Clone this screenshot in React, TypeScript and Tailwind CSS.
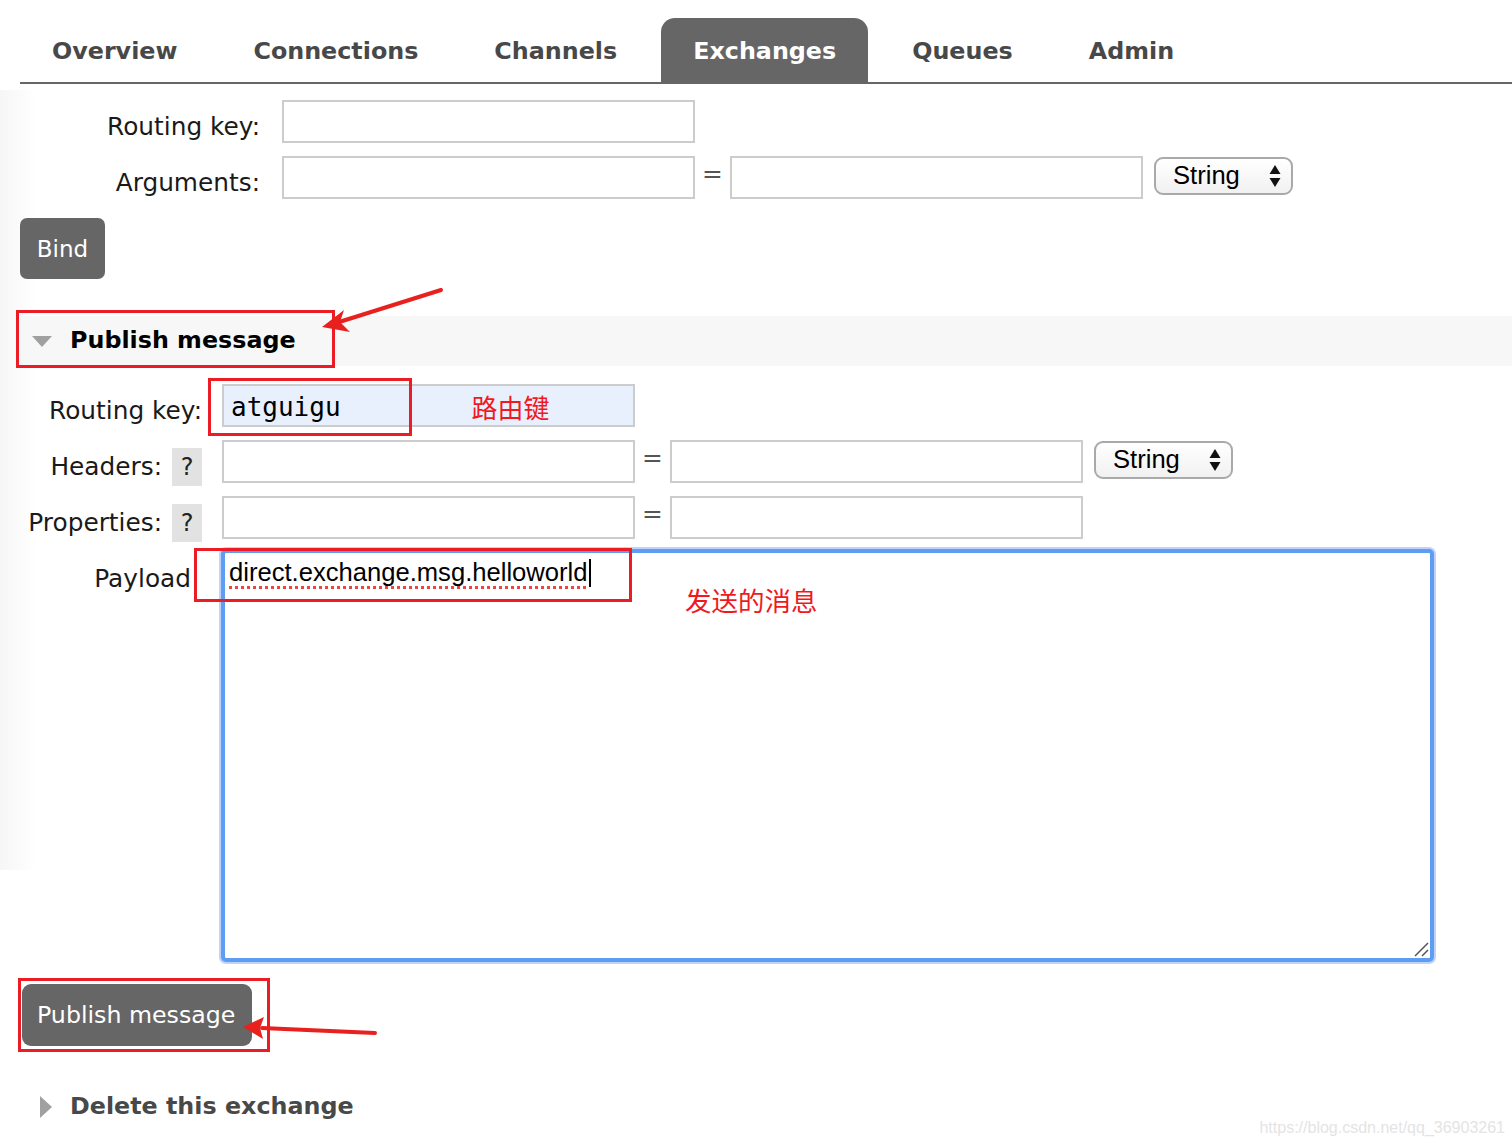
const tabs = ["Overview", "Connections", "Channels", "Exchanges", "Queues", "Admin"];

const verdana = "font-['Verdana','DejaVu_Sans',sans-serif]";

const TextInput = ({ className = "" }: { className?: string }) => (
  <div className={`h-[43px] w-[413px] shrink-0 border-2 border-[#cccccc] bg-white ${className}`} />
);

const TypeSelect = () => (
  <div className="mt-[1px] flex h-[38px] w-[139px] items-center justify-between rounded-[9px] border-2 border-[#a9a9a9] bg-gradient-to-b from-white to-[#f1f1f1] pl-[17px] pr-[10px] font-['Liberation_Sans',Arial,sans-serif] text-[25.6px] text-black">
    <span className="leading-none">String</span>
    <svg width="12" height="24" viewBox="0 0 12 24">
      <path d="M6 1 L11.5 10 L0.5 10 Z" fill="#111" />
      <path d="M6 23 L11.5 14 L0.5 14 Z" fill="#111" />
    </svg>
  </div>
);

const Help = () => (
  <span className="ml-[10px] flex h-[38px] w-[30px] items-center justify-center bg-[#e2e2e2] text-[24px] text-[#222]">?</span>
);

const Eq = () => <span className="mt-[3px] w-[35px] text-center text-[#555]">=</span>;

const RedBox = ({ className }: { className: string }) => (
  <div className={`pointer-events-none absolute border-[3px] border-[#ec1c24] ${className}`} />
);

const App = () => {
  return (
    <div className={`relative h-[1148px] w-full overflow-hidden bg-white ${verdana}`}>
      {/* faint shadow on the left edge */}
      <div className="pointer-events-none absolute left-0 top-[90px] h-[780px] w-[36px] bg-gradient-to-r from-[#f6f6f6] to-transparent" />

      <div className="relative pl-5 pt-[18px]">
        {/* tab bar */}
        <div className="flex h-[66px] gap-3 border-b-2 border-[#666666]">
          {tabs.map((t) => (
            <div
              key={t}
              className={`flex h-16 items-center px-8 pt-[4px] text-[23.8px] font-bold ${
                t === "Exchanges" ? "rounded-t-[14px] bg-[#666666] text-white" : "text-[#484848]"
              }`}
            >
              {t}
            </div>
          ))}
        </div>

        {/* bind form */}
        <div className="mt-4 flex flex-col gap-[13px] text-[24.8px] leading-[30px] text-[#1a1a1a]">
          <div className="flex h-[43px] items-start">
            <span className="mt-[12px] w-[240px] text-right">Routing key:</span>
            <TextInput className="ml-[22px]" />
          </div>
          <div className="flex h-[43px] items-start">
            <span className="mt-[12px] w-[240px] text-right">Arguments:</span>
            <TextInput className="ml-[22px]" />
            <Eq />
            <TextInput />
            <div className="ml-[11px]">
              <TypeSelect />
            </div>
          </div>
        </div>
        <button className="mt-[19px] h-[61px] w-[85px] rounded-[7px] bg-[#666666] pt-[2px] text-[23px] text-white">Bind</button>

        {/* publish message section */}
        <div className="mt-[37px] flex h-[50px] items-center bg-[#f7f7f7]">
          <svg width="20" height="11" viewBox="0 0 20 11" className="ml-3">
            <path d="M0 0 L20 0 L10 11 Z" fill="#a0a0a0" />
          </svg>
          <span className="ml-[18px] text-[23.8px] font-bold text-black">Publish message</span>
        </div>

        <div className="mt-[18px] flex flex-col gap-[13px] text-[24.8px] leading-[30px] text-[#1a1a1a]">
          <div className="flex h-[43px] items-start">
            <span className="mt-[12px] w-[182px] text-right">Routing key:</span>
            <div className="ml-[20px] flex h-[43px] w-[413px] items-center border-2 border-[#cccccc] bg-[#e8f0fe] pt-[3px]">
              <span className="pl-[7px] font-['DejaVu_Sans_Mono',monospace] text-[26px] text-black">atguigu</span>
              <span className="ml-[131px] font-['Noto_Sans_CJK_SC',sans-serif] text-[26px] text-[#f0191e]">路由键</span>
            </div>
          </div>
          <div className="flex h-[43px] items-start">
            <span className="mt-[8px] flex w-[182px] items-center justify-end">
              Headers:
              <Help />
            </span>
            <TextInput className="ml-[20px]" />
            <Eq />
            <TextInput />
            <div className="ml-[11px]">
              <TypeSelect />
            </div>
          </div>
          <div className="flex h-[43px] items-start">
            <span className="mt-[8px] flex w-[182px] items-center justify-end">
              Properties:
              <Help />
            </span>
            <TextInput className="ml-[20px]" />
            <Eq />
            <TextInput />
          </div>
        </div>

        <div className="mt-[10px] flex items-start text-[24.8px] leading-[30px] text-[#1a1a1a]">
          <span className="mt-[15px] w-[171px] text-right">Payload</span>
          <div className="relative ml-[30px] h-[413px] w-[1213px] rounded-[5px] border-4 border-[#5f9cf4] bg-white px-[4px] shadow-[0_0_0_2px_#bcd4fa] font-['Liberation_Sans',Arial,sans-serif] text-[25.6px] leading-[34px] text-black">
            <span className="underline decoration-[#ee4444] decoration-dotted decoration-[3px] underline-offset-[5px] [text-decoration-skip-ink:none]">
              direct.exchange.msg.helloworld
            </span>
            <span className="ml-[1px] inline-block h-[28px] w-[2px] translate-y-[6px] bg-black" />
            <svg width="16" height="16" viewBox="0 0 16 16" className="absolute bottom-[1px] right-[1px]">
              <path d="M2 15 L15 2 M9 15 L15 9" stroke="#555" strokeWidth="1.5" />
            </svg>
          </div>
        </div>

        <button className="mt-[22px] ml-[2px] h-[62px] w-[230px] rounded-[9px] bg-[#666666] pl-[15px] pt-[2px] text-left text-[23.7px] text-white">
          Publish message
        </button>

        <div className="mt-[45px] flex h-[32px] items-center">
          <svg width="12" height="22" viewBox="0 0 12 22" className="ml-5">
            <path d="M0 0 L12 11 L0 22 Z" fill="#a0a0a0" />
          </svg>
          <span className="ml-[18px] text-[23.8px] font-bold text-[#484848]">Delete this exchange</span>
        </div>
      </div>

      {/* annotations */}
      <RedBox className="left-[16px] top-[310px] h-[58px] w-[319px]" />
      <RedBox className="left-[208px] top-[378px] h-[58px] w-[204px]" />
      <RedBox className="left-[194px] top-[548px] h-[54px] w-[438px]" />
      <RedBox className="left-[18px] top-[978px] h-[74px] w-[252px]" />
      <span className="absolute left-[685px] top-[587px] font-['Noto_Sans_CJK_SC',sans-serif] text-[26.5px] leading-none text-[#f0191e]">
        发送的消息
      </span>
      <svg className="pointer-events-none absolute left-0 top-0" width="1512" height="1148">
        <path d="M441 290 L336 323" stroke="#e8201e" strokeWidth="4" strokeLinecap="round" />
        <path d="M322 327 L344 310 L340 322 L350 332 Z" fill="#e8201e" />
        <path d="M375 1033 L262 1028" stroke="#e8201e" strokeWidth="4" strokeLinecap="round" />
        <path d="M243 1027 L264 1017 L260 1028 L263 1039 Z" fill="#e8201e" />
      </svg>
      <span className="absolute bottom-[8px] right-[7px] font-['Liberation_Sans',Arial,sans-serif] text-[16px] text-[#e4e4e4]">
        https://blog.csdn.net/qq_36903261
      </span>
    </div>
  );
};

export default App;
